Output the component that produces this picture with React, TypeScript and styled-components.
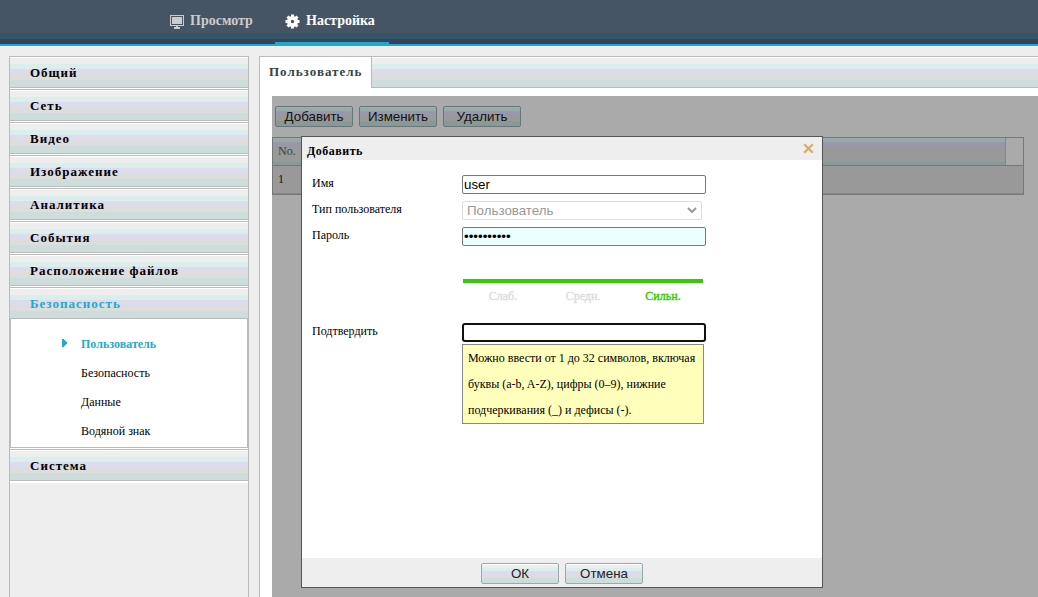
import React from "react";
import styled, { createGlobalStyle, css } from "styled-components";

const serif = '"Liberation Serif", "Times New Roman", serif';
const sans = '"Liberation Sans", Arial, sans-serif';

const bands = css`
  background: linear-gradient(
    to bottom,
    #fff 0 1px,
    #eee 1px 7px,
    #dbeeec 7px 12px,
    #dddcec 12px 17px,
    #ddd 17px 23px,
    #ccdddc 23px
  );
`;

const GlobalStyle = createGlobalStyle`
  * { box-sizing: border-box; }
  body { margin: 0; overflow: hidden; background: #eee; color: #000; font-family: ${serif}; }
`;

const Page = styled.div`
  position: relative;
  display: flex;
  flex-direction: column;
  width: 1038px;
  height: 597px;
  overflow: hidden;
`;

const Header = styled.header`
  display: flex;
  height: 46px;
  padding-left: 160px;
  background: linear-gradient(to bottom, #455565 0 33px, #345566 33px 39px, #334466 39px 41px, #334455 41px 44px, #22aacc 44px);
`;

const NavItem = styled.div<{ $active?: boolean; $width: number }>`
  display: flex;
  width: ${(p) => p.$width}px;
  height: 46px;
  padding: 0 0 1px 10px;
  align-items: center;
  gap: ${(p) => (p.$active ? 6 : 5)}px;
  border-bottom: ${(p) => (p.$active ? "4px solid #22aacc" : "4px solid transparent")};
  color: ${(p) => (p.$active ? "#fff" : "#ccc")};
  font-weight: bold;
  font-size: 14px;
  line-height: 16px;
  white-space: nowrap;
  svg { flex: none; display: block; margin-top: 1px; }
`;

const Body = styled.div`
  display: flex;
  flex: 1;
  min-height: 0;
  padding: 10px 0 0 9px;
  gap: 10px;
`;

const Sidebar = styled.nav`
  width: 240px;
  border: 1px solid #bbb;
  border-width: 0 1px;
`;

const MenuItem = styled.div<{ $active?: boolean; $open?: boolean }>`
  height: 32px;
  margin-bottom: ${(p) => (p.$open ? 0 : 1)}px;
  padding-left: 20px;
  border: 1px solid #bbb;
  border-width: 1px 0;
  ${bands}
  background-origin: padding-box;
  box-shadow: 0 2px 0 #fff;
  color: ${(p) => (p.$active ? "#22aacc" : "#000")};
  font-size: 13px;
  font-weight: bold;
  line-height: 31px;
  letter-spacing: 1px;
`;

const SubMenu = styled.ul`
  height: 129px;
  margin: 0 0 1px;
  padding: 11px 0 0 70px;
  list-style: none;
  background: #fff;
  border: 1px solid #bbb;
  border-top: 0;
  box-shadow: 0 1px 0 #fff;
`;

const SubItem = styled.li<{ $active?: boolean }>`
  position: relative;
  height: 29px;
  font-size: 12px;
  line-height: 29px;
  font-weight: ${(p) => (p.$active ? "bold" : "normal")};
  color: ${(p) => (p.$active ? "#22aacc" : "#000")};
  svg { position: absolute; left: -19px; top: 9px; }
`;

const Main = styled.main`
  display: flex;
  flex: 1;
  flex-direction: column;
  border-left: 1px solid #bbb;
  background: #fff;
`;

const TabStrip = styled.div`
  display: flex;
  height: 32px;
  border-top: 1px solid #bbb;
`;

const Tab = styled.div`
  width: 112px;
  padding-left: 9px;
  border-right: 1px solid #bbb;
  background: #fff;
  color: #334444;
  font-size: 13px;
  font-weight: bold;
  line-height: 30px;
  letter-spacing: 1px;
`;

const TabRest = styled.div`
  flex: 1;
  ${bands}
  border-bottom: 1px solid #bbb;
`;

const Dimmed = styled.section`
  flex: 1;
  margin: 8px 0 0 12px;
  padding-top: 10px;
  background: #aaa;
`;

const Toolbar = styled.div`
  display: flex;
  gap: 6px;
  padding-left: 3px;
`;

const Button = styled.button<{ $dim?: boolean }>`
  width: 78px;
  height: 21px;
  padding: 0;
  border: 1px solid ${(p) => (p.$dim ? "#667777" : "#99aaaa")};
  border-radius: 2px;
  background: ${(p) =>
    p.$dim
      ? "linear-gradient(to bottom, #aaa 0 1px, #99aaaa 1px 4px, #9998a9 4px 9px, #999 9px 14px, #889998 14px)"
      : "linear-gradient(to bottom, #fff 0 1px, #eee 1px 4px, #dbeeec 4px 7px, #dddcec 7px 11px, #ddd 11px 14px, #ccdddc 14px)"};
  color: ${(p) => (p.$dim ? "#111" : "#222")};
  font: 13.333px/19px ${sans};
`;

const Table = styled.div`
  width: 752px;
  height: 58px;
  margin-top: 10px;
  border: 1px solid #777;
`;

const HeadRow = styled.div`
  display: flex;
  height: 28px;
  border-bottom: 1px solid #777;
`;

const HeadCell = styled.div`
  width: 733px;
  padding-left: 5px;
  border-right: 1px solid #888;
  background: linear-gradient(to bottom, #98a9a8 0 4px, #9998a9 4px 9px, #999 9px 24px, #889998 24px);
  color: #334444;
  font-size: 12px;
  line-height: 27px;
`;

const Row = styled.div`
  height: 28px;
  padding-left: 5px;
  border-bottom: 1px solid #888;
  background: #999;
  color: #111;
  font-size: 12px;
  line-height: 27px;
`;

const Dialog = styled.div`
  position: absolute;
  left: 301px;
  top: 136px;
  display: flex;
  flex-direction: column;
  width: 522px;
  height: 452px;
  border: 1px solid #555;
  background: #fff;
`;

const DialogTitle = styled.div`
  display: flex;
  justify-content: space-between;
  height: 23px;
  padding: 0 8px 0 5px;
  background: #eee;
  font-size: 12px;
  font-weight: bold;
  line-height: 28px;
  letter-spacing: 0.5px;
  svg { margin-top: 6px; }
`;

const Form = styled.div`
  flex: 1;
  padding: 15px 0 0 10px;
`;

const Field = styled.div<{ $gap?: number }>`
  display: flex;
  height: 19px;
  margin-bottom: ${(p) => p.$gap ?? 7}px;
`;

const Label = styled.label`
  width: 150px;
  font-size: 12px;
  line-height: 17px;
`;

const Input = styled.input<{ $filled?: boolean; $focused?: boolean }>`
  width: 244px;
  height: 19px;
  padding: ${(p) => (p.$focused ? 0 : 1)}px;
  border: ${(p) => (p.$focused ? "2px solid #111" : "1px solid #777")};
  border-radius: ${(p) => (p.$focused ? 3 : 2)}px;
  background: ${(p) => (p.$filled ? "#ebffff" : "#fff")};
  color: #000;
  font: 13.333px ${sans};
  outline: 0;
`;

const SelectBox = styled.div`
  display: flex;
  width: 240px;
  height: 19px;
  padding: 0 4px;
  justify-content: space-between;
  align-items: center;
  border: 1px solid #ddd;
  border-radius: 2px;
  color: #999;
  font: 13.333px/17px ${sans};
`;

const Strength = styled.div`
  width: 240px;
  margin: 0 0 20px 151px;
  border-top: 4px solid #33cc00;
`;

const Levels = styled.div`
  display: grid;
  grid-template-columns: repeat(3, 80px);
  height: 20px;
  padding-top: 4px;
  text-align: center;
  font-size: 12px;
  line-height: 18px;
`;

const Level = styled.span<{ $on?: boolean }>`
  color: ${(p) => (p.$on ? "#33cc00" : "#ddd")};
  -webkit-text-stroke: 0.4px currentColor;
`;

const Hint = styled.div`
  width: 242px;
  height: 80px;
  margin-left: 150px;
  padding-left: 5px;
  border: 1px solid #888;
  background: #ffffbb;
  font-size: 12px;
  line-height: 26px;
  white-space: nowrap;
`;

const DialogFooter = styled.div`
  display: flex;
  justify-content: center;
  gap: 6px;
  height: 29px;
  padding-top: 5px;
  background: #eee;
`;

const MonitorIcon = () => (
  <svg width="15" height="15" viewBox="0 -1 15 15" shapeRendering="crispEdges">
    <path d="M0 0h14v11H0zM1 1v9h12V1z" fill="#ccc" fillRule="evenodd" />
    <path d="M2 2h10v7H2zM6 11h2v1h2v2H4v-2h2z" fill="#ccc" />
  </svg>
);

const teeth = [0, 45, 90, 135, 180, 225, 270, 315];
const GearIcon = () => (
  <svg width="15" height="15" viewBox="-7.5 -7.5 15 15">
    <circle r="3.6" fill="none" stroke="#fff" strokeWidth="3.8" />
    {teeth.map((a) => (
      <rect key={a} x="-1.5" y="-7" width="3" height="3" fill="#fff" transform={`rotate(${a})`} />
    ))}
  </svg>
);

const CloseIcon = () => (
  <svg width="11" height="11" viewBox="0 0 11 11">
    <path d="M1.2 1.2l8.6 8.6M9.8 1.2l-8.6 8.6" stroke="#ddaa55" strokeWidth="2.1" />
  </svg>
);

const ArrowIcon = () => (
  <svg width="5" height="8" viewBox="0 0 5 8" shapeRendering="crispEdges">
    <path d="M0 0h2v1h1v1h1v1h1v2H4v1H3v1H2v1H0z" fill="#22aacc" />
  </svg>
);

const ChevronIcon = () => (
  <svg width="10" height="7" viewBox="0 0 10 7">
    <path d="M1 1l4 4 4-4" fill="none" stroke="#999" strokeWidth="2" />
  </svg>
);

const sections = ["Общий", "Сеть", "Видео", "Изображение", "Аналитика", "События", "Расположение файлов"];
const subItems = ["Пользователь", "Безопасность", "Данные", "Водяной знак"];

export default function App() {
  return (
    <>
      <GlobalStyle />
      <Page>
        <Header>
          <NavItem $width={115}><MonitorIcon />Просмотр</NavItem>
          <NavItem $width={114} $active><GearIcon />Настройка</NavItem>
        </Header>
        <Body>
          <Sidebar>
            {sections.map((s) => <MenuItem key={s}>{s}</MenuItem>)}
            <MenuItem $active $open>Безопасность</MenuItem>
            <SubMenu>
              {subItems.map((s, i) => (
                <SubItem key={s} $active={i === 0}>{i === 0 && <ArrowIcon />}{s}</SubItem>
              ))}
            </SubMenu>
            <MenuItem>Система</MenuItem>
          </Sidebar>
          <Main>
            <TabStrip><Tab>Пользователь</Tab><TabRest /></TabStrip>
            <Dimmed>
              <Toolbar>
                <Button $dim>Добавить</Button>
                <Button $dim>Изменить</Button>
                <Button $dim>Удалить</Button>
              </Toolbar>
              <Table>
                <HeadRow><HeadCell>No.</HeadCell></HeadRow>
                <Row>1</Row>
              </Table>
            </Dimmed>
          </Main>
        </Body>
        <Dialog>
          <DialogTitle>Добавить<CloseIcon /></DialogTitle>
          <Form>
            <Field><Label>Имя</Label><Input defaultValue="user" /></Field>
            <Field><Label>Тип пользователя</Label><SelectBox>Пользователь<ChevronIcon /></SelectBox></Field>
            <Field $gap={33}><Label>Пароль</Label><Input type="password" defaultValue="abcdefghij" $filled /></Field>
            <Strength>
              <Levels><Level>Слаб.</Level><Level>Средн.</Level><Level $on>Сильн.</Level></Levels>
            </Strength>
            <Field $gap={2}><Label>Подтвердить</Label><Input type="password" $focused /></Field>
            <Hint>
              Можно ввести от 1 до 32 символов, включая<br />
              буквы (a-b, A-Z), цифры (0–9), нижние<br />
              подчеркивания (_) и дефисы (-).
            </Hint>
          </Form>
          <DialogFooter><Button>ОК</Button><Button>Отмена</Button></DialogFooter>
        </Dialog>
      </Page>
    </>
  );
}
